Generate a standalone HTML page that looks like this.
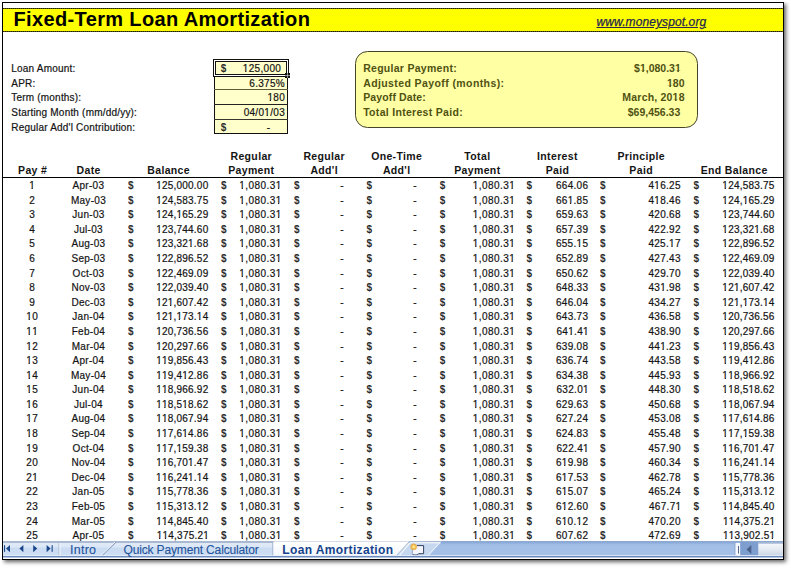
<!DOCTYPE html>
<html><head><meta charset="utf-8">
<style>
html,body{margin:0;padding:0;background:#fff;}
body{width:791px;height:568px;position:relative;overflow:hidden;font-family:"Liberation Sans",sans-serif;color:#141414;}
#t div{position:absolute;white-space:pre;font-size:10px;line-height:12px;-webkit-text-stroke:0.2px #141414;}
i.o{font-style:normal;display:inline-block;clip-path:polygon(0 0,100% 0,100% 8px,3.6px 8px,3.6px 100%,2.3px 100%,2.3px 8px,0 8px);}
i.ob{font-style:normal;display:inline-block;clip-path:polygon(0 0,100% 0,100% 9px,3.95px 9px,3.95px 100%,2.35px 100%,2.35px 9px,0 9px);}
.d{font-weight:bold;-webkit-text-stroke:0 !important;color:#2c2c2c;}
.sb{color:#4f5212;}
.abs{position:absolute;}
</style></head><body>
<!-- shadow -->
<div class="abs" style="left:2px;top:2px;width:782px;height:558px;box-sizing:border-box;border:1px solid #000;background:#fff;box-shadow:2px 2px 4px rgba(0,0,0,0.62);clip-path:inset(0 -12px -12px 0);"></div>
<!-- title bar -->
<div class="abs" style="left:3px;top:8px;width:780px;height:24px;background:#ffff00;"></div>
<div class="abs" style="left:3px;top:8px;width:780px;height:1px;background:repeating-linear-gradient(90deg,#1e1e06 0 1.4px,#5a5a10 1.4px 2px);"></div>
<div class="abs" style="left:3px;top:31px;width:780px;height:1px;background:repeating-linear-gradient(90deg,#1e1e06 0 1.4px,#5a5a10 1.4px 2px);"></div>
<div class="abs" style="left:13.5px;top:7.2px;font-size:20px;font-weight:bold;letter-spacing:0.36px;line-height:24px;color:#000;white-space:pre;">Fixed-Term Loan Amortization</div>
<div class="abs" style="left:596.5px;top:14px;font-size:12px;font-style:italic;letter-spacing:0.1px;line-height:16px;color:#26264f;-webkit-text-stroke:0.25px #26264f;text-underline-offset:1px;text-decoration:underline;white-space:pre;">www.moneyspot.org</div>
<!-- input box -->
<div class="abs" style="left:214px;top:60px;width:74px;height:74px;box-sizing:border-box;border:1px solid #111;background:#ffffcc;"></div>
<div class="abs" style="left:214px;top:89px;width:74px;height:1.4px;background:#5e5a3c;"></div>
<div class="abs" style="left:214px;top:104px;width:74px;height:1px;background:#222;"></div>
<div class="abs" style="left:214px;top:119px;width:74px;height:1px;background:#38362a;"></div>
<div class="abs" style="left:213px;top:59px;width:76px;height:18px;box-sizing:border-box;border:1px solid #111;"></div>
<div class="abs" style="left:214px;top:60px;width:74px;height:16px;box-sizing:border-box;border:1px solid #fff;"></div>
<div class="abs" style="left:215px;top:61px;width:72px;height:14px;box-sizing:border-box;border:1px solid #111;"></div>
<div class="abs" style="left:285px;top:73px;width:5px;height:5px;background:#111;"></div>
<div class="abs" style="left:287px;top:73px;width:1px;height:5px;background:rgba(255,255,255,0.5);"></div>
<div class="abs" style="left:285px;top:75px;width:5px;height:1px;background:rgba(255,255,255,0.5);"></div>
<!-- summary box -->
<div class="abs" style="left:354.6px;top:51.2px;width:343.2px;height:77px;box-sizing:border-box;border:1.8px solid #45452a;border-radius:12.5px;background:#ffffa4;"></div>
<!-- header underline -->
<div class="abs" style="left:3px;top:177px;width:780px;height:1px;background:#000;"></div>
<div id="t">
<div style="top:63px;letter-spacing:0.2px;left:11.30px;">Loan Amount:</div>
<div style="top:78px;letter-spacing:0.2px;left:11.30px;">APR:</div>
<div style="top:92px;letter-spacing:0.2px;left:11.30px;">Term (months):</div>
<div style="top:107px;letter-spacing:0.2px;left:11.30px;">Starting Month (mm/dd/yy):</div>
<div style="top:122px;letter-spacing:0.2px;left:11.30px;">Regular Add&#39;l Contribution:</div>
<div class="d" style="top:63px;left:220.80px;">$</div>
<div style="top:63px;letter-spacing:0.3px;right:509.90px;text-align:right;"><i class="o">1</i>25,000</div>
<div style="top:78px;letter-spacing:0.3px;right:506.00px;text-align:right;">6.375%</div>
<div style="top:92px;letter-spacing:0.3px;right:506.00px;text-align:right;"><i class="o">1</i>80</div>
<div style="top:107px;letter-spacing:0.3px;right:506.00px;text-align:right;">04/0<i class="o">1</i>/03</div>
<div class="d" style="top:122px;left:220.80px;">$</div>
<div style="top:122px;right:520.80px;text-align:right;">-</div>
<div class="sb" style="top:62px;font-size:10.5px;line-height:13px;font-weight:bold;-webkit-text-stroke:0;letter-spacing:0.28px;left:363.20px;">Regular Payment:</div>
<div class="sb" style="top:62px;font-size:10.5px;line-height:13px;font-weight:bold;-webkit-text-stroke:0;right:110.20px;text-align:right;">$<i class="ob">1</i>,080.3<i class="ob">1</i></div>
<div class="sb" style="top:77px;font-size:10.5px;line-height:13px;font-weight:bold;-webkit-text-stroke:0;letter-spacing:0.4px;left:363.20px;">Adjusted Payoff (months):</div>
<div class="sb" style="top:77px;font-size:10.5px;line-height:13px;font-weight:bold;-webkit-text-stroke:0;right:106.50px;text-align:right;"><i class="ob">1</i>80</div>
<div class="sb" style="top:91px;font-size:10.5px;line-height:13px;font-weight:bold;-webkit-text-stroke:0;letter-spacing:0.12px;left:363.20px;">Payoff Date:</div>
<div class="sb" style="top:91px;font-size:10.5px;line-height:13px;font-weight:bold;-webkit-text-stroke:0;letter-spacing:0.2px;right:106.30px;text-align:right;">March, 20<i class="ob">1</i>8</div>
<div class="sb" style="top:106px;font-size:10.5px;line-height:13px;font-weight:bold;-webkit-text-stroke:0;letter-spacing:0.3px;left:363.20px;">Total Interest Paid:</div>
<div class="sb" style="top:106px;font-size:10.5px;line-height:13px;font-weight:bold;-webkit-text-stroke:0;right:110.70px;text-align:right;">$69,456.33</div>
<div style="top:164px;font-size:10.5px;line-height:13px;font-weight:bold;-webkit-text-stroke:0;letter-spacing:0.35px;left:-67.33px;width:200px;text-align:center;">Pay #</div>
<div style="top:164px;font-size:10.5px;line-height:13px;font-weight:bold;-webkit-text-stroke:0;letter-spacing:0.35px;left:-11.32px;width:200px;text-align:center;">Date</div>
<div style="top:164px;font-size:10.5px;line-height:13px;font-weight:bold;-webkit-text-stroke:0;letter-spacing:0.35px;left:68.67px;width:200px;text-align:center;">Balance</div>
<div style="top:150px;font-size:10.5px;line-height:13px;font-weight:bold;-webkit-text-stroke:0;letter-spacing:0.35px;left:151.28px;width:200px;text-align:center;">Regular</div>
<div style="top:164px;font-size:10.5px;line-height:13px;font-weight:bold;-webkit-text-stroke:0;letter-spacing:0.35px;left:151.28px;width:200px;text-align:center;">Payment</div>
<div style="top:150px;font-size:10.5px;line-height:13px;font-weight:bold;-webkit-text-stroke:0;letter-spacing:0.35px;left:224.18px;width:200px;text-align:center;">Regular</div>
<div style="top:164px;font-size:10.5px;line-height:13px;font-weight:bold;-webkit-text-stroke:0;letter-spacing:0.35px;left:224.18px;width:200px;text-align:center;">Add&#39;l</div>
<div style="top:150px;font-size:10.5px;line-height:13px;font-weight:bold;-webkit-text-stroke:0;letter-spacing:0.35px;left:296.68px;width:200px;text-align:center;">One-Time</div>
<div style="top:164px;font-size:10.5px;line-height:13px;font-weight:bold;-webkit-text-stroke:0;letter-spacing:0.35px;left:296.68px;width:200px;text-align:center;">Add&#39;l</div>
<div style="top:150px;font-size:10.5px;line-height:13px;font-weight:bold;-webkit-text-stroke:0;letter-spacing:0.35px;left:377.38px;width:200px;text-align:center;">Total</div>
<div style="top:164px;font-size:10.5px;line-height:13px;font-weight:bold;-webkit-text-stroke:0;letter-spacing:0.35px;left:377.38px;width:200px;text-align:center;">Payment</div>
<div style="top:150px;font-size:10.5px;line-height:13px;font-weight:bold;-webkit-text-stroke:0;letter-spacing:0.35px;left:457.47px;width:200px;text-align:center;">Interest</div>
<div style="top:164px;font-size:10.5px;line-height:13px;font-weight:bold;-webkit-text-stroke:0;letter-spacing:0.35px;left:457.47px;width:200px;text-align:center;">Paid</div>
<div style="top:150px;font-size:10.5px;line-height:13px;font-weight:bold;-webkit-text-stroke:0;letter-spacing:0.35px;left:541.17px;width:200px;text-align:center;">Principle</div>
<div style="top:164px;font-size:10.5px;line-height:13px;font-weight:bold;-webkit-text-stroke:0;letter-spacing:0.35px;left:541.17px;width:200px;text-align:center;">Paid</div>
<div style="top:164px;font-size:10.5px;line-height:13px;font-weight:bold;-webkit-text-stroke:0;letter-spacing:0.35px;left:634.17px;width:200px;text-align:center;">End Balance</div>
<div style="top:180px;letter-spacing:0.3px;left:-67.85px;width:200px;text-align:center;"><i class="o">1</i></div>
<div style="top:180px;letter-spacing:0.3px;left:-11.55px;width:200px;text-align:center;">Apr-03</div>
<div class="d" style="top:180px;left:128.00px;">$</div>
<div style="top:180px;letter-spacing:0.22px;right:582.58px;text-align:right;"><i class="o">1</i>25,000.00</div>
<div class="d" style="top:180px;left:221.10px;">$</div>
<div style="top:180px;letter-spacing:0.42px;right:509.38px;text-align:right;"><i class="o">1</i>,080.3<i class="o">1</i></div>
<div class="d" style="top:180px;left:294.10px;">$</div>
<div style="top:180px;right:447.50px;text-align:right;">-</div>
<div class="d" style="top:180px;left:366.40px;">$</div>
<div style="top:180px;right:374.50px;text-align:right;">-</div>
<div class="d" style="top:180px;left:439.80px;">$</div>
<div style="top:180px;letter-spacing:0.42px;right:275.88px;text-align:right;"><i class="o">1</i>,080.3<i class="o">1</i></div>
<div class="d" style="top:180px;left:526.60px;">$</div>
<div style="top:180px;letter-spacing:0.3px;right:202.70px;text-align:right;">664.06</div>
<div class="d" style="top:180px;left:599.90px;">$</div>
<div style="top:180px;letter-spacing:0.3px;right:110.20px;text-align:right;">4<i class="o">1</i>6.25</div>
<div class="d" style="top:180px;left:693.50px;">$</div>
<div style="top:180px;letter-spacing:0.22px;right:16.38px;text-align:right;"><i class="o">1</i>24,583.75</div>
<div style="top:195px;letter-spacing:0.3px;left:-67.85px;width:200px;text-align:center;">2</div>
<div style="top:195px;letter-spacing:0.3px;left:-11.55px;width:200px;text-align:center;">May-03</div>
<div class="d" style="top:195px;left:128.00px;">$</div>
<div style="top:195px;letter-spacing:0.22px;right:582.58px;text-align:right;"><i class="o">1</i>24,583.75</div>
<div class="d" style="top:195px;left:221.10px;">$</div>
<div style="top:195px;letter-spacing:0.42px;right:509.38px;text-align:right;"><i class="o">1</i>,080.3<i class="o">1</i></div>
<div class="d" style="top:195px;left:294.10px;">$</div>
<div style="top:195px;right:447.50px;text-align:right;">-</div>
<div class="d" style="top:195px;left:366.40px;">$</div>
<div style="top:195px;right:374.50px;text-align:right;">-</div>
<div class="d" style="top:195px;left:439.80px;">$</div>
<div style="top:195px;letter-spacing:0.42px;right:275.88px;text-align:right;"><i class="o">1</i>,080.3<i class="o">1</i></div>
<div class="d" style="top:195px;left:526.60px;">$</div>
<div style="top:195px;letter-spacing:0.3px;right:202.70px;text-align:right;">66<i class="o">1</i>.85</div>
<div class="d" style="top:195px;left:599.90px;">$</div>
<div style="top:195px;letter-spacing:0.3px;right:110.20px;text-align:right;">4<i class="o">1</i>8.46</div>
<div class="d" style="top:195px;left:693.50px;">$</div>
<div style="top:195px;letter-spacing:0.22px;right:16.38px;text-align:right;"><i class="o">1</i>24,<i class="o">1</i>65.29</div>
<div style="top:209px;letter-spacing:0.3px;left:-67.85px;width:200px;text-align:center;">3</div>
<div style="top:209px;letter-spacing:0.3px;left:-11.55px;width:200px;text-align:center;">Jun-03</div>
<div class="d" style="top:209px;left:128.00px;">$</div>
<div style="top:209px;letter-spacing:0.22px;right:582.58px;text-align:right;"><i class="o">1</i>24,<i class="o">1</i>65.29</div>
<div class="d" style="top:209px;left:221.10px;">$</div>
<div style="top:209px;letter-spacing:0.42px;right:509.38px;text-align:right;"><i class="o">1</i>,080.3<i class="o">1</i></div>
<div class="d" style="top:209px;left:294.10px;">$</div>
<div style="top:209px;right:447.50px;text-align:right;">-</div>
<div class="d" style="top:209px;left:366.40px;">$</div>
<div style="top:209px;right:374.50px;text-align:right;">-</div>
<div class="d" style="top:209px;left:439.80px;">$</div>
<div style="top:209px;letter-spacing:0.42px;right:275.88px;text-align:right;"><i class="o">1</i>,080.3<i class="o">1</i></div>
<div class="d" style="top:209px;left:526.60px;">$</div>
<div style="top:209px;letter-spacing:0.3px;right:202.70px;text-align:right;">659.63</div>
<div class="d" style="top:209px;left:599.90px;">$</div>
<div style="top:209px;letter-spacing:0.3px;right:110.20px;text-align:right;">420.68</div>
<div class="d" style="top:209px;left:693.50px;">$</div>
<div style="top:209px;letter-spacing:0.22px;right:16.38px;text-align:right;"><i class="o">1</i>23,744.60</div>
<div style="top:224px;letter-spacing:0.3px;left:-67.85px;width:200px;text-align:center;">4</div>
<div style="top:224px;letter-spacing:0.3px;left:-11.55px;width:200px;text-align:center;">Jul-03</div>
<div class="d" style="top:224px;left:128.00px;">$</div>
<div style="top:224px;letter-spacing:0.22px;right:582.58px;text-align:right;"><i class="o">1</i>23,744.60</div>
<div class="d" style="top:224px;left:221.10px;">$</div>
<div style="top:224px;letter-spacing:0.42px;right:509.38px;text-align:right;"><i class="o">1</i>,080.3<i class="o">1</i></div>
<div class="d" style="top:224px;left:294.10px;">$</div>
<div style="top:224px;right:447.50px;text-align:right;">-</div>
<div class="d" style="top:224px;left:366.40px;">$</div>
<div style="top:224px;right:374.50px;text-align:right;">-</div>
<div class="d" style="top:224px;left:439.80px;">$</div>
<div style="top:224px;letter-spacing:0.42px;right:275.88px;text-align:right;"><i class="o">1</i>,080.3<i class="o">1</i></div>
<div class="d" style="top:224px;left:526.60px;">$</div>
<div style="top:224px;letter-spacing:0.3px;right:202.70px;text-align:right;">657.39</div>
<div class="d" style="top:224px;left:599.90px;">$</div>
<div style="top:224px;letter-spacing:0.3px;right:110.20px;text-align:right;">422.92</div>
<div class="d" style="top:224px;left:693.50px;">$</div>
<div style="top:224px;letter-spacing:0.22px;right:16.38px;text-align:right;"><i class="o">1</i>23,32<i class="o">1</i>.68</div>
<div style="top:238px;letter-spacing:0.3px;left:-67.85px;width:200px;text-align:center;">5</div>
<div style="top:238px;letter-spacing:0.3px;left:-11.55px;width:200px;text-align:center;">Aug-03</div>
<div class="d" style="top:238px;left:128.00px;">$</div>
<div style="top:238px;letter-spacing:0.22px;right:582.58px;text-align:right;"><i class="o">1</i>23,32<i class="o">1</i>.68</div>
<div class="d" style="top:238px;left:221.10px;">$</div>
<div style="top:238px;letter-spacing:0.42px;right:509.38px;text-align:right;"><i class="o">1</i>,080.3<i class="o">1</i></div>
<div class="d" style="top:238px;left:294.10px;">$</div>
<div style="top:238px;right:447.50px;text-align:right;">-</div>
<div class="d" style="top:238px;left:366.40px;">$</div>
<div style="top:238px;right:374.50px;text-align:right;">-</div>
<div class="d" style="top:238px;left:439.80px;">$</div>
<div style="top:238px;letter-spacing:0.42px;right:275.88px;text-align:right;"><i class="o">1</i>,080.3<i class="o">1</i></div>
<div class="d" style="top:238px;left:526.60px;">$</div>
<div style="top:238px;letter-spacing:0.3px;right:202.70px;text-align:right;">655.<i class="o">1</i>5</div>
<div class="d" style="top:238px;left:599.90px;">$</div>
<div style="top:238px;letter-spacing:0.3px;right:110.20px;text-align:right;">425.<i class="o">1</i>7</div>
<div class="d" style="top:238px;left:693.50px;">$</div>
<div style="top:238px;letter-spacing:0.22px;right:16.38px;text-align:right;"><i class="o">1</i>22,896.52</div>
<div style="top:253px;letter-spacing:0.3px;left:-67.85px;width:200px;text-align:center;">6</div>
<div style="top:253px;letter-spacing:0.3px;left:-11.55px;width:200px;text-align:center;">Sep-03</div>
<div class="d" style="top:253px;left:128.00px;">$</div>
<div style="top:253px;letter-spacing:0.22px;right:582.58px;text-align:right;"><i class="o">1</i>22,896.52</div>
<div class="d" style="top:253px;left:221.10px;">$</div>
<div style="top:253px;letter-spacing:0.42px;right:509.38px;text-align:right;"><i class="o">1</i>,080.3<i class="o">1</i></div>
<div class="d" style="top:253px;left:294.10px;">$</div>
<div style="top:253px;right:447.50px;text-align:right;">-</div>
<div class="d" style="top:253px;left:366.40px;">$</div>
<div style="top:253px;right:374.50px;text-align:right;">-</div>
<div class="d" style="top:253px;left:439.80px;">$</div>
<div style="top:253px;letter-spacing:0.42px;right:275.88px;text-align:right;"><i class="o">1</i>,080.3<i class="o">1</i></div>
<div class="d" style="top:253px;left:526.60px;">$</div>
<div style="top:253px;letter-spacing:0.3px;right:202.70px;text-align:right;">652.89</div>
<div class="d" style="top:253px;left:599.90px;">$</div>
<div style="top:253px;letter-spacing:0.3px;right:110.20px;text-align:right;">427.43</div>
<div class="d" style="top:253px;left:693.50px;">$</div>
<div style="top:253px;letter-spacing:0.22px;right:16.38px;text-align:right;"><i class="o">1</i>22,469.09</div>
<div style="top:268px;letter-spacing:0.3px;left:-67.85px;width:200px;text-align:center;">7</div>
<div style="top:268px;letter-spacing:0.3px;left:-11.55px;width:200px;text-align:center;">Oct-03</div>
<div class="d" style="top:268px;left:128.00px;">$</div>
<div style="top:268px;letter-spacing:0.22px;right:582.58px;text-align:right;"><i class="o">1</i>22,469.09</div>
<div class="d" style="top:268px;left:221.10px;">$</div>
<div style="top:268px;letter-spacing:0.42px;right:509.38px;text-align:right;"><i class="o">1</i>,080.3<i class="o">1</i></div>
<div class="d" style="top:268px;left:294.10px;">$</div>
<div style="top:268px;right:447.50px;text-align:right;">-</div>
<div class="d" style="top:268px;left:366.40px;">$</div>
<div style="top:268px;right:374.50px;text-align:right;">-</div>
<div class="d" style="top:268px;left:439.80px;">$</div>
<div style="top:268px;letter-spacing:0.42px;right:275.88px;text-align:right;"><i class="o">1</i>,080.3<i class="o">1</i></div>
<div class="d" style="top:268px;left:526.60px;">$</div>
<div style="top:268px;letter-spacing:0.3px;right:202.70px;text-align:right;">650.62</div>
<div class="d" style="top:268px;left:599.90px;">$</div>
<div style="top:268px;letter-spacing:0.3px;right:110.20px;text-align:right;">429.70</div>
<div class="d" style="top:268px;left:693.50px;">$</div>
<div style="top:268px;letter-spacing:0.22px;right:16.38px;text-align:right;"><i class="o">1</i>22,039.40</div>
<div style="top:282px;letter-spacing:0.3px;left:-67.85px;width:200px;text-align:center;">8</div>
<div style="top:282px;letter-spacing:0.3px;left:-11.55px;width:200px;text-align:center;">Nov-03</div>
<div class="d" style="top:282px;left:128.00px;">$</div>
<div style="top:282px;letter-spacing:0.22px;right:582.58px;text-align:right;"><i class="o">1</i>22,039.40</div>
<div class="d" style="top:282px;left:221.10px;">$</div>
<div style="top:282px;letter-spacing:0.42px;right:509.38px;text-align:right;"><i class="o">1</i>,080.3<i class="o">1</i></div>
<div class="d" style="top:282px;left:294.10px;">$</div>
<div style="top:282px;right:447.50px;text-align:right;">-</div>
<div class="d" style="top:282px;left:366.40px;">$</div>
<div style="top:282px;right:374.50px;text-align:right;">-</div>
<div class="d" style="top:282px;left:439.80px;">$</div>
<div style="top:282px;letter-spacing:0.42px;right:275.88px;text-align:right;"><i class="o">1</i>,080.3<i class="o">1</i></div>
<div class="d" style="top:282px;left:526.60px;">$</div>
<div style="top:282px;letter-spacing:0.3px;right:202.70px;text-align:right;">648.33</div>
<div class="d" style="top:282px;left:599.90px;">$</div>
<div style="top:282px;letter-spacing:0.3px;right:110.20px;text-align:right;">43<i class="o">1</i>.98</div>
<div class="d" style="top:282px;left:693.50px;">$</div>
<div style="top:282px;letter-spacing:0.22px;right:16.38px;text-align:right;"><i class="o">1</i>2<i class="o">1</i>,607.42</div>
<div style="top:297px;letter-spacing:0.3px;left:-67.85px;width:200px;text-align:center;">9</div>
<div style="top:297px;letter-spacing:0.3px;left:-11.55px;width:200px;text-align:center;">Dec-03</div>
<div class="d" style="top:297px;left:128.00px;">$</div>
<div style="top:297px;letter-spacing:0.22px;right:582.58px;text-align:right;"><i class="o">1</i>2<i class="o">1</i>,607.42</div>
<div class="d" style="top:297px;left:221.10px;">$</div>
<div style="top:297px;letter-spacing:0.42px;right:509.38px;text-align:right;"><i class="o">1</i>,080.3<i class="o">1</i></div>
<div class="d" style="top:297px;left:294.10px;">$</div>
<div style="top:297px;right:447.50px;text-align:right;">-</div>
<div class="d" style="top:297px;left:366.40px;">$</div>
<div style="top:297px;right:374.50px;text-align:right;">-</div>
<div class="d" style="top:297px;left:439.80px;">$</div>
<div style="top:297px;letter-spacing:0.42px;right:275.88px;text-align:right;"><i class="o">1</i>,080.3<i class="o">1</i></div>
<div class="d" style="top:297px;left:526.60px;">$</div>
<div style="top:297px;letter-spacing:0.3px;right:202.70px;text-align:right;">646.04</div>
<div class="d" style="top:297px;left:599.90px;">$</div>
<div style="top:297px;letter-spacing:0.3px;right:110.20px;text-align:right;">434.27</div>
<div class="d" style="top:297px;left:693.50px;">$</div>
<div style="top:297px;letter-spacing:0.22px;right:16.38px;text-align:right;"><i class="o">1</i>2<i class="o">1</i>,<i class="o">1</i>73.<i class="o">1</i>4</div>
<div style="top:311px;letter-spacing:0.3px;left:-67.85px;width:200px;text-align:center;"><i class="o">1</i>0</div>
<div style="top:311px;letter-spacing:0.3px;left:-11.55px;width:200px;text-align:center;">Jan-04</div>
<div class="d" style="top:311px;left:128.00px;">$</div>
<div style="top:311px;letter-spacing:0.22px;right:582.58px;text-align:right;"><i class="o">1</i>2<i class="o">1</i>,<i class="o">1</i>73.<i class="o">1</i>4</div>
<div class="d" style="top:311px;left:221.10px;">$</div>
<div style="top:311px;letter-spacing:0.42px;right:509.38px;text-align:right;"><i class="o">1</i>,080.3<i class="o">1</i></div>
<div class="d" style="top:311px;left:294.10px;">$</div>
<div style="top:311px;right:447.50px;text-align:right;">-</div>
<div class="d" style="top:311px;left:366.40px;">$</div>
<div style="top:311px;right:374.50px;text-align:right;">-</div>
<div class="d" style="top:311px;left:439.80px;">$</div>
<div style="top:311px;letter-spacing:0.42px;right:275.88px;text-align:right;"><i class="o">1</i>,080.3<i class="o">1</i></div>
<div class="d" style="top:311px;left:526.60px;">$</div>
<div style="top:311px;letter-spacing:0.3px;right:202.70px;text-align:right;">643.73</div>
<div class="d" style="top:311px;left:599.90px;">$</div>
<div style="top:311px;letter-spacing:0.3px;right:110.20px;text-align:right;">436.58</div>
<div class="d" style="top:311px;left:693.50px;">$</div>
<div style="top:311px;letter-spacing:0.22px;right:16.38px;text-align:right;"><i class="o">1</i>20,736.56</div>
<div style="top:326px;letter-spacing:0.3px;left:-67.85px;width:200px;text-align:center;"><i class="o">1</i><i class="o">1</i></div>
<div style="top:326px;letter-spacing:0.3px;left:-11.55px;width:200px;text-align:center;">Feb-04</div>
<div class="d" style="top:326px;left:128.00px;">$</div>
<div style="top:326px;letter-spacing:0.22px;right:582.58px;text-align:right;"><i class="o">1</i>20,736.56</div>
<div class="d" style="top:326px;left:221.10px;">$</div>
<div style="top:326px;letter-spacing:0.42px;right:509.38px;text-align:right;"><i class="o">1</i>,080.3<i class="o">1</i></div>
<div class="d" style="top:326px;left:294.10px;">$</div>
<div style="top:326px;right:447.50px;text-align:right;">-</div>
<div class="d" style="top:326px;left:366.40px;">$</div>
<div style="top:326px;right:374.50px;text-align:right;">-</div>
<div class="d" style="top:326px;left:439.80px;">$</div>
<div style="top:326px;letter-spacing:0.42px;right:275.88px;text-align:right;"><i class="o">1</i>,080.3<i class="o">1</i></div>
<div class="d" style="top:326px;left:526.60px;">$</div>
<div style="top:326px;letter-spacing:0.3px;right:202.10px;text-align:right;">64<i class="o">1</i>.4<i class="o">1</i></div>
<div class="d" style="top:326px;left:599.90px;">$</div>
<div style="top:326px;letter-spacing:0.3px;right:110.20px;text-align:right;">438.90</div>
<div class="d" style="top:326px;left:693.50px;">$</div>
<div style="top:326px;letter-spacing:0.22px;right:16.38px;text-align:right;"><i class="o">1</i>20,297.66</div>
<div style="top:341px;letter-spacing:0.3px;left:-67.85px;width:200px;text-align:center;"><i class="o">1</i>2</div>
<div style="top:341px;letter-spacing:0.3px;left:-11.55px;width:200px;text-align:center;">Mar-04</div>
<div class="d" style="top:341px;left:128.00px;">$</div>
<div style="top:341px;letter-spacing:0.22px;right:582.58px;text-align:right;"><i class="o">1</i>20,297.66</div>
<div class="d" style="top:341px;left:221.10px;">$</div>
<div style="top:341px;letter-spacing:0.42px;right:509.38px;text-align:right;"><i class="o">1</i>,080.3<i class="o">1</i></div>
<div class="d" style="top:341px;left:294.10px;">$</div>
<div style="top:341px;right:447.50px;text-align:right;">-</div>
<div class="d" style="top:341px;left:366.40px;">$</div>
<div style="top:341px;right:374.50px;text-align:right;">-</div>
<div class="d" style="top:341px;left:439.80px;">$</div>
<div style="top:341px;letter-spacing:0.42px;right:275.88px;text-align:right;"><i class="o">1</i>,080.3<i class="o">1</i></div>
<div class="d" style="top:341px;left:526.60px;">$</div>
<div style="top:341px;letter-spacing:0.3px;right:202.70px;text-align:right;">639.08</div>
<div class="d" style="top:341px;left:599.90px;">$</div>
<div style="top:341px;letter-spacing:0.3px;right:110.20px;text-align:right;">44<i class="o">1</i>.23</div>
<div class="d" style="top:341px;left:693.50px;">$</div>
<div style="top:341px;letter-spacing:0.22px;right:16.38px;text-align:right;"><i class="o">1</i><i class="o">1</i>9,856.43</div>
<div style="top:355px;letter-spacing:0.3px;left:-67.85px;width:200px;text-align:center;"><i class="o">1</i>3</div>
<div style="top:355px;letter-spacing:0.3px;left:-11.55px;width:200px;text-align:center;">Apr-04</div>
<div class="d" style="top:355px;left:128.00px;">$</div>
<div style="top:355px;letter-spacing:0.22px;right:582.58px;text-align:right;"><i class="o">1</i><i class="o">1</i>9,856.43</div>
<div class="d" style="top:355px;left:221.10px;">$</div>
<div style="top:355px;letter-spacing:0.42px;right:509.38px;text-align:right;"><i class="o">1</i>,080.3<i class="o">1</i></div>
<div class="d" style="top:355px;left:294.10px;">$</div>
<div style="top:355px;right:447.50px;text-align:right;">-</div>
<div class="d" style="top:355px;left:366.40px;">$</div>
<div style="top:355px;right:374.50px;text-align:right;">-</div>
<div class="d" style="top:355px;left:439.80px;">$</div>
<div style="top:355px;letter-spacing:0.42px;right:275.88px;text-align:right;"><i class="o">1</i>,080.3<i class="o">1</i></div>
<div class="d" style="top:355px;left:526.60px;">$</div>
<div style="top:355px;letter-spacing:0.3px;right:202.70px;text-align:right;">636.74</div>
<div class="d" style="top:355px;left:599.90px;">$</div>
<div style="top:355px;letter-spacing:0.3px;right:110.20px;text-align:right;">443.58</div>
<div class="d" style="top:355px;left:693.50px;">$</div>
<div style="top:355px;letter-spacing:0.22px;right:16.38px;text-align:right;"><i class="o">1</i><i class="o">1</i>9,4<i class="o">1</i>2.86</div>
<div style="top:370px;letter-spacing:0.3px;left:-67.85px;width:200px;text-align:center;"><i class="o">1</i>4</div>
<div style="top:370px;letter-spacing:0.3px;left:-11.55px;width:200px;text-align:center;">May-04</div>
<div class="d" style="top:370px;left:128.00px;">$</div>
<div style="top:370px;letter-spacing:0.22px;right:582.58px;text-align:right;"><i class="o">1</i><i class="o">1</i>9,4<i class="o">1</i>2.86</div>
<div class="d" style="top:370px;left:221.10px;">$</div>
<div style="top:370px;letter-spacing:0.42px;right:509.38px;text-align:right;"><i class="o">1</i>,080.3<i class="o">1</i></div>
<div class="d" style="top:370px;left:294.10px;">$</div>
<div style="top:370px;right:447.50px;text-align:right;">-</div>
<div class="d" style="top:370px;left:366.40px;">$</div>
<div style="top:370px;right:374.50px;text-align:right;">-</div>
<div class="d" style="top:370px;left:439.80px;">$</div>
<div style="top:370px;letter-spacing:0.42px;right:275.88px;text-align:right;"><i class="o">1</i>,080.3<i class="o">1</i></div>
<div class="d" style="top:370px;left:526.60px;">$</div>
<div style="top:370px;letter-spacing:0.3px;right:202.70px;text-align:right;">634.38</div>
<div class="d" style="top:370px;left:599.90px;">$</div>
<div style="top:370px;letter-spacing:0.3px;right:110.20px;text-align:right;">445.93</div>
<div class="d" style="top:370px;left:693.50px;">$</div>
<div style="top:370px;letter-spacing:0.22px;right:16.38px;text-align:right;"><i class="o">1</i><i class="o">1</i>8,966.92</div>
<div style="top:384px;letter-spacing:0.3px;left:-67.85px;width:200px;text-align:center;"><i class="o">1</i>5</div>
<div style="top:384px;letter-spacing:0.3px;left:-11.55px;width:200px;text-align:center;">Jun-04</div>
<div class="d" style="top:384px;left:128.00px;">$</div>
<div style="top:384px;letter-spacing:0.22px;right:582.58px;text-align:right;"><i class="o">1</i><i class="o">1</i>8,966.92</div>
<div class="d" style="top:384px;left:221.10px;">$</div>
<div style="top:384px;letter-spacing:0.42px;right:509.38px;text-align:right;"><i class="o">1</i>,080.3<i class="o">1</i></div>
<div class="d" style="top:384px;left:294.10px;">$</div>
<div style="top:384px;right:447.50px;text-align:right;">-</div>
<div class="d" style="top:384px;left:366.40px;">$</div>
<div style="top:384px;right:374.50px;text-align:right;">-</div>
<div class="d" style="top:384px;left:439.80px;">$</div>
<div style="top:384px;letter-spacing:0.42px;right:275.88px;text-align:right;"><i class="o">1</i>,080.3<i class="o">1</i></div>
<div class="d" style="top:384px;left:526.60px;">$</div>
<div style="top:384px;letter-spacing:0.3px;right:202.10px;text-align:right;">632.0<i class="o">1</i></div>
<div class="d" style="top:384px;left:599.90px;">$</div>
<div style="top:384px;letter-spacing:0.3px;right:110.20px;text-align:right;">448.30</div>
<div class="d" style="top:384px;left:693.50px;">$</div>
<div style="top:384px;letter-spacing:0.22px;right:16.38px;text-align:right;"><i class="o">1</i><i class="o">1</i>8,5<i class="o">1</i>8.62</div>
<div style="top:399px;letter-spacing:0.3px;left:-67.85px;width:200px;text-align:center;"><i class="o">1</i>6</div>
<div style="top:399px;letter-spacing:0.3px;left:-11.55px;width:200px;text-align:center;">Jul-04</div>
<div class="d" style="top:399px;left:128.00px;">$</div>
<div style="top:399px;letter-spacing:0.22px;right:582.58px;text-align:right;"><i class="o">1</i><i class="o">1</i>8,5<i class="o">1</i>8.62</div>
<div class="d" style="top:399px;left:221.10px;">$</div>
<div style="top:399px;letter-spacing:0.42px;right:509.38px;text-align:right;"><i class="o">1</i>,080.3<i class="o">1</i></div>
<div class="d" style="top:399px;left:294.10px;">$</div>
<div style="top:399px;right:447.50px;text-align:right;">-</div>
<div class="d" style="top:399px;left:366.40px;">$</div>
<div style="top:399px;right:374.50px;text-align:right;">-</div>
<div class="d" style="top:399px;left:439.80px;">$</div>
<div style="top:399px;letter-spacing:0.42px;right:275.88px;text-align:right;"><i class="o">1</i>,080.3<i class="o">1</i></div>
<div class="d" style="top:399px;left:526.60px;">$</div>
<div style="top:399px;letter-spacing:0.3px;right:202.70px;text-align:right;">629.63</div>
<div class="d" style="top:399px;left:599.90px;">$</div>
<div style="top:399px;letter-spacing:0.3px;right:110.20px;text-align:right;">450.68</div>
<div class="d" style="top:399px;left:693.50px;">$</div>
<div style="top:399px;letter-spacing:0.22px;right:16.38px;text-align:right;"><i class="o">1</i><i class="o">1</i>8,067.94</div>
<div style="top:413px;letter-spacing:0.3px;left:-67.85px;width:200px;text-align:center;"><i class="o">1</i>7</div>
<div style="top:413px;letter-spacing:0.3px;left:-11.55px;width:200px;text-align:center;">Aug-04</div>
<div class="d" style="top:413px;left:128.00px;">$</div>
<div style="top:413px;letter-spacing:0.22px;right:582.58px;text-align:right;"><i class="o">1</i><i class="o">1</i>8,067.94</div>
<div class="d" style="top:413px;left:221.10px;">$</div>
<div style="top:413px;letter-spacing:0.42px;right:509.38px;text-align:right;"><i class="o">1</i>,080.3<i class="o">1</i></div>
<div class="d" style="top:413px;left:294.10px;">$</div>
<div style="top:413px;right:447.50px;text-align:right;">-</div>
<div class="d" style="top:413px;left:366.40px;">$</div>
<div style="top:413px;right:374.50px;text-align:right;">-</div>
<div class="d" style="top:413px;left:439.80px;">$</div>
<div style="top:413px;letter-spacing:0.42px;right:275.88px;text-align:right;"><i class="o">1</i>,080.3<i class="o">1</i></div>
<div class="d" style="top:413px;left:526.60px;">$</div>
<div style="top:413px;letter-spacing:0.3px;right:202.70px;text-align:right;">627.24</div>
<div class="d" style="top:413px;left:599.90px;">$</div>
<div style="top:413px;letter-spacing:0.3px;right:110.20px;text-align:right;">453.08</div>
<div class="d" style="top:413px;left:693.50px;">$</div>
<div style="top:413px;letter-spacing:0.22px;right:16.38px;text-align:right;"><i class="o">1</i><i class="o">1</i>7,6<i class="o">1</i>4.86</div>
<div style="top:428px;letter-spacing:0.3px;left:-67.85px;width:200px;text-align:center;"><i class="o">1</i>8</div>
<div style="top:428px;letter-spacing:0.3px;left:-11.55px;width:200px;text-align:center;">Sep-04</div>
<div class="d" style="top:428px;left:128.00px;">$</div>
<div style="top:428px;letter-spacing:0.22px;right:582.58px;text-align:right;"><i class="o">1</i><i class="o">1</i>7,6<i class="o">1</i>4.86</div>
<div class="d" style="top:428px;left:221.10px;">$</div>
<div style="top:428px;letter-spacing:0.42px;right:509.38px;text-align:right;"><i class="o">1</i>,080.3<i class="o">1</i></div>
<div class="d" style="top:428px;left:294.10px;">$</div>
<div style="top:428px;right:447.50px;text-align:right;">-</div>
<div class="d" style="top:428px;left:366.40px;">$</div>
<div style="top:428px;right:374.50px;text-align:right;">-</div>
<div class="d" style="top:428px;left:439.80px;">$</div>
<div style="top:428px;letter-spacing:0.42px;right:275.88px;text-align:right;"><i class="o">1</i>,080.3<i class="o">1</i></div>
<div class="d" style="top:428px;left:526.60px;">$</div>
<div style="top:428px;letter-spacing:0.3px;right:202.70px;text-align:right;">624.83</div>
<div class="d" style="top:428px;left:599.90px;">$</div>
<div style="top:428px;letter-spacing:0.3px;right:110.20px;text-align:right;">455.48</div>
<div class="d" style="top:428px;left:693.50px;">$</div>
<div style="top:428px;letter-spacing:0.22px;right:16.38px;text-align:right;"><i class="o">1</i><i class="o">1</i>7,<i class="o">1</i>59.38</div>
<div style="top:443px;letter-spacing:0.3px;left:-67.85px;width:200px;text-align:center;"><i class="o">1</i>9</div>
<div style="top:443px;letter-spacing:0.3px;left:-11.55px;width:200px;text-align:center;">Oct-04</div>
<div class="d" style="top:443px;left:128.00px;">$</div>
<div style="top:443px;letter-spacing:0.22px;right:582.58px;text-align:right;"><i class="o">1</i><i class="o">1</i>7,<i class="o">1</i>59.38</div>
<div class="d" style="top:443px;left:221.10px;">$</div>
<div style="top:443px;letter-spacing:0.42px;right:509.38px;text-align:right;"><i class="o">1</i>,080.3<i class="o">1</i></div>
<div class="d" style="top:443px;left:294.10px;">$</div>
<div style="top:443px;right:447.50px;text-align:right;">-</div>
<div class="d" style="top:443px;left:366.40px;">$</div>
<div style="top:443px;right:374.50px;text-align:right;">-</div>
<div class="d" style="top:443px;left:439.80px;">$</div>
<div style="top:443px;letter-spacing:0.42px;right:275.88px;text-align:right;"><i class="o">1</i>,080.3<i class="o">1</i></div>
<div class="d" style="top:443px;left:526.60px;">$</div>
<div style="top:443px;letter-spacing:0.3px;right:202.10px;text-align:right;">622.4<i class="o">1</i></div>
<div class="d" style="top:443px;left:599.90px;">$</div>
<div style="top:443px;letter-spacing:0.3px;right:110.20px;text-align:right;">457.90</div>
<div class="d" style="top:443px;left:693.50px;">$</div>
<div style="top:443px;letter-spacing:0.22px;right:16.38px;text-align:right;"><i class="o">1</i><i class="o">1</i>6,70<i class="o">1</i>.47</div>
<div style="top:457px;letter-spacing:0.3px;left:-67.85px;width:200px;text-align:center;">20</div>
<div style="top:457px;letter-spacing:0.3px;left:-11.55px;width:200px;text-align:center;">Nov-04</div>
<div class="d" style="top:457px;left:128.00px;">$</div>
<div style="top:457px;letter-spacing:0.22px;right:582.58px;text-align:right;"><i class="o">1</i><i class="o">1</i>6,70<i class="o">1</i>.47</div>
<div class="d" style="top:457px;left:221.10px;">$</div>
<div style="top:457px;letter-spacing:0.42px;right:509.38px;text-align:right;"><i class="o">1</i>,080.3<i class="o">1</i></div>
<div class="d" style="top:457px;left:294.10px;">$</div>
<div style="top:457px;right:447.50px;text-align:right;">-</div>
<div class="d" style="top:457px;left:366.40px;">$</div>
<div style="top:457px;right:374.50px;text-align:right;">-</div>
<div class="d" style="top:457px;left:439.80px;">$</div>
<div style="top:457px;letter-spacing:0.42px;right:275.88px;text-align:right;"><i class="o">1</i>,080.3<i class="o">1</i></div>
<div class="d" style="top:457px;left:526.60px;">$</div>
<div style="top:457px;letter-spacing:0.3px;right:202.70px;text-align:right;">6<i class="o">1</i>9.98</div>
<div class="d" style="top:457px;left:599.90px;">$</div>
<div style="top:457px;letter-spacing:0.3px;right:110.20px;text-align:right;">460.34</div>
<div class="d" style="top:457px;left:693.50px;">$</div>
<div style="top:457px;letter-spacing:0.22px;right:16.38px;text-align:right;"><i class="o">1</i><i class="o">1</i>6,24<i class="o">1</i>.<i class="o">1</i>4</div>
<div style="top:472px;letter-spacing:0.3px;left:-67.85px;width:200px;text-align:center;">2<i class="o">1</i></div>
<div style="top:472px;letter-spacing:0.3px;left:-11.55px;width:200px;text-align:center;">Dec-04</div>
<div class="d" style="top:472px;left:128.00px;">$</div>
<div style="top:472px;letter-spacing:0.22px;right:582.58px;text-align:right;"><i class="o">1</i><i class="o">1</i>6,24<i class="o">1</i>.<i class="o">1</i>4</div>
<div class="d" style="top:472px;left:221.10px;">$</div>
<div style="top:472px;letter-spacing:0.42px;right:509.38px;text-align:right;"><i class="o">1</i>,080.3<i class="o">1</i></div>
<div class="d" style="top:472px;left:294.10px;">$</div>
<div style="top:472px;right:447.50px;text-align:right;">-</div>
<div class="d" style="top:472px;left:366.40px;">$</div>
<div style="top:472px;right:374.50px;text-align:right;">-</div>
<div class="d" style="top:472px;left:439.80px;">$</div>
<div style="top:472px;letter-spacing:0.42px;right:275.88px;text-align:right;"><i class="o">1</i>,080.3<i class="o">1</i></div>
<div class="d" style="top:472px;left:526.60px;">$</div>
<div style="top:472px;letter-spacing:0.3px;right:202.70px;text-align:right;">6<i class="o">1</i>7.53</div>
<div class="d" style="top:472px;left:599.90px;">$</div>
<div style="top:472px;letter-spacing:0.3px;right:110.20px;text-align:right;">462.78</div>
<div class="d" style="top:472px;left:693.50px;">$</div>
<div style="top:472px;letter-spacing:0.22px;right:16.38px;text-align:right;"><i class="o">1</i><i class="o">1</i>5,778.36</div>
<div style="top:486px;letter-spacing:0.3px;left:-67.85px;width:200px;text-align:center;">22</div>
<div style="top:486px;letter-spacing:0.3px;left:-11.55px;width:200px;text-align:center;">Jan-05</div>
<div class="d" style="top:486px;left:128.00px;">$</div>
<div style="top:486px;letter-spacing:0.22px;right:582.58px;text-align:right;"><i class="o">1</i><i class="o">1</i>5,778.36</div>
<div class="d" style="top:486px;left:221.10px;">$</div>
<div style="top:486px;letter-spacing:0.42px;right:509.38px;text-align:right;"><i class="o">1</i>,080.3<i class="o">1</i></div>
<div class="d" style="top:486px;left:294.10px;">$</div>
<div style="top:486px;right:447.50px;text-align:right;">-</div>
<div class="d" style="top:486px;left:366.40px;">$</div>
<div style="top:486px;right:374.50px;text-align:right;">-</div>
<div class="d" style="top:486px;left:439.80px;">$</div>
<div style="top:486px;letter-spacing:0.42px;right:275.88px;text-align:right;"><i class="o">1</i>,080.3<i class="o">1</i></div>
<div class="d" style="top:486px;left:526.60px;">$</div>
<div style="top:486px;letter-spacing:0.3px;right:202.70px;text-align:right;">6<i class="o">1</i>5.07</div>
<div class="d" style="top:486px;left:599.90px;">$</div>
<div style="top:486px;letter-spacing:0.3px;right:110.20px;text-align:right;">465.24</div>
<div class="d" style="top:486px;left:693.50px;">$</div>
<div style="top:486px;letter-spacing:0.22px;right:16.38px;text-align:right;"><i class="o">1</i><i class="o">1</i>5,3<i class="o">1</i>3.<i class="o">1</i>2</div>
<div style="top:501px;letter-spacing:0.3px;left:-67.85px;width:200px;text-align:center;">23</div>
<div style="top:501px;letter-spacing:0.3px;left:-11.55px;width:200px;text-align:center;">Feb-05</div>
<div class="d" style="top:501px;left:128.00px;">$</div>
<div style="top:501px;letter-spacing:0.22px;right:582.58px;text-align:right;"><i class="o">1</i><i class="o">1</i>5,3<i class="o">1</i>3.<i class="o">1</i>2</div>
<div class="d" style="top:501px;left:221.10px;">$</div>
<div style="top:501px;letter-spacing:0.42px;right:509.38px;text-align:right;"><i class="o">1</i>,080.3<i class="o">1</i></div>
<div class="d" style="top:501px;left:294.10px;">$</div>
<div style="top:501px;right:447.50px;text-align:right;">-</div>
<div class="d" style="top:501px;left:366.40px;">$</div>
<div style="top:501px;right:374.50px;text-align:right;">-</div>
<div class="d" style="top:501px;left:439.80px;">$</div>
<div style="top:501px;letter-spacing:0.42px;right:275.88px;text-align:right;"><i class="o">1</i>,080.3<i class="o">1</i></div>
<div class="d" style="top:501px;left:526.60px;">$</div>
<div style="top:501px;letter-spacing:0.3px;right:202.70px;text-align:right;">6<i class="o">1</i>2.60</div>
<div class="d" style="top:501px;left:599.90px;">$</div>
<div style="top:501px;letter-spacing:0.3px;right:109.60px;text-align:right;">467.7<i class="o">1</i></div>
<div class="d" style="top:501px;left:693.50px;">$</div>
<div style="top:501px;letter-spacing:0.22px;right:16.38px;text-align:right;"><i class="o">1</i><i class="o">1</i>4,845.40</div>
<div style="top:516px;letter-spacing:0.3px;left:-67.85px;width:200px;text-align:center;">24</div>
<div style="top:516px;letter-spacing:0.3px;left:-11.55px;width:200px;text-align:center;">Mar-05</div>
<div class="d" style="top:516px;left:128.00px;">$</div>
<div style="top:516px;letter-spacing:0.22px;right:582.58px;text-align:right;"><i class="o">1</i><i class="o">1</i>4,845.40</div>
<div class="d" style="top:516px;left:221.10px;">$</div>
<div style="top:516px;letter-spacing:0.42px;right:509.38px;text-align:right;"><i class="o">1</i>,080.3<i class="o">1</i></div>
<div class="d" style="top:516px;left:294.10px;">$</div>
<div style="top:516px;right:447.50px;text-align:right;">-</div>
<div class="d" style="top:516px;left:366.40px;">$</div>
<div style="top:516px;right:374.50px;text-align:right;">-</div>
<div class="d" style="top:516px;left:439.80px;">$</div>
<div style="top:516px;letter-spacing:0.42px;right:275.88px;text-align:right;"><i class="o">1</i>,080.3<i class="o">1</i></div>
<div class="d" style="top:516px;left:526.60px;">$</div>
<div style="top:516px;letter-spacing:0.3px;right:202.70px;text-align:right;">6<i class="o">1</i>0.<i class="o">1</i>2</div>
<div class="d" style="top:516px;left:599.90px;">$</div>
<div style="top:516px;letter-spacing:0.3px;right:110.20px;text-align:right;">470.20</div>
<div class="d" style="top:516px;left:693.50px;">$</div>
<div style="top:516px;letter-spacing:0.22px;right:15.78px;text-align:right;"><i class="o">1</i><i class="o">1</i>4,375.2<i class="o">1</i></div>
<div style="top:530px;letter-spacing:0.3px;left:-67.85px;width:200px;text-align:center;">25</div>
<div style="top:530px;letter-spacing:0.3px;left:-11.55px;width:200px;text-align:center;">Apr-05</div>
<div class="d" style="top:530px;left:128.00px;">$</div>
<div style="top:530px;letter-spacing:0.22px;right:581.98px;text-align:right;"><i class="o">1</i><i class="o">1</i>4,375.2<i class="o">1</i></div>
<div class="d" style="top:530px;left:221.10px;">$</div>
<div style="top:530px;letter-spacing:0.42px;right:509.38px;text-align:right;"><i class="o">1</i>,080.3<i class="o">1</i></div>
<div class="d" style="top:530px;left:294.10px;">$</div>
<div style="top:530px;right:447.50px;text-align:right;">-</div>
<div class="d" style="top:530px;left:366.40px;">$</div>
<div style="top:530px;right:374.50px;text-align:right;">-</div>
<div class="d" style="top:530px;left:439.80px;">$</div>
<div style="top:530px;letter-spacing:0.42px;right:275.88px;text-align:right;"><i class="o">1</i>,080.3<i class="o">1</i></div>
<div class="d" style="top:530px;left:526.60px;">$</div>
<div style="top:530px;letter-spacing:0.3px;right:202.70px;text-align:right;">607.62</div>
<div class="d" style="top:530px;left:599.90px;">$</div>
<div style="top:530px;letter-spacing:0.3px;right:110.20px;text-align:right;">472.69</div>
<div class="d" style="top:530px;left:693.50px;">$</div>
<div style="top:530px;letter-spacing:0.22px;right:15.78px;text-align:right;"><i class="o">1</i><i class="o">1</i>3,902.5<i class="o">1</i></div>
</div>
<!-- tab bar -->
<svg class="abs" style="left:0;top:536px;" width="791" height="24" viewBox="0 536 791 24" shape-rendering="geometricPrecision">
<defs>
<linearGradient id="gTab" x1="0" y1="0" x2="0" y2="1"><stop offset="0" stop-color="#e3ecf8"/><stop offset="0.42" stop-color="#dbe6f6"/><stop offset="0.45" stop-color="#c9dbf2"/><stop offset="1" stop-color="#cfdff4"/></linearGradient>
<linearGradient id="gAct" x1="0" y1="0" x2="0" y2="1"><stop offset="0" stop-color="#ffffff"/><stop offset="1" stop-color="#f3f6fb"/></linearGradient>
<linearGradient id="gStrip" x1="0" y1="0" x2="0" y2="1"><stop offset="0" stop-color="#86a6d7"/><stop offset="0.2" stop-color="#a2bee6"/><stop offset="1" stop-color="#a6c1e8"/></linearGradient>
<linearGradient id="gThumb" x1="0" y1="0" x2="0" y2="1"><stop offset="0" stop-color="#f7f9fc"/><stop offset="0.5" stop-color="#e6ebf3"/><stop offset="1" stop-color="#c9d3e3"/></linearGradient>
<radialGradient id="gStar" cx="0.5" cy="0.5" r="0.5"><stop offset="0" stop-color="#fff7b8"/><stop offset="0.35" stop-color="#f8d060"/><stop offset="0.7" stop-color="#e8a030" stop-opacity="0.85"/><stop offset="1" stop-color="#e8a030" stop-opacity="0"/></radialGradient>
</defs>
<!-- base strip -->
<rect x="3" y="541" width="780" height="18" fill="url(#gStrip)"/>
<rect x="3" y="541" width="780" height="1" fill="#8fa8cf"/>
<!-- nav area + tabs background -->
<polygon points="3,541 3,556 428,556 441,541" fill="url(#gTab)"/>
<polygon points="3,541 441,541 439.3,543 3,543" fill="#a9b9d1"/>
<!-- separators between tabs -->
<rect x="58.5" y="543" width="1" height="13" fill="#a8b8d0"/>
<rect x="59.5" y="543" width="1" height="13" fill="#f4f8fd"/>
<line x1="102" y1="555.5" x2="116" y2="542" stroke="#8ea3c6" stroke-width="1.1"/>
<line x1="101" y1="555.5" x2="115" y2="542" stroke="#ffffff" stroke-width="0.8"/>
<rect x="272.2" y="543" width="1" height="13" fill="#a8b8d0"/>
<!-- active tab -->
<polygon points="273.5,541.5 409.5,541.5 396.5,556 273.5,556" fill="url(#gAct)"/>
<!-- insert tab -->
<polygon points="399.5,556 410,542.5 441,542.5 428,556" fill="#c6d8f0"/>
<polyline points="399.5,555.5 410,542.8 440.5,542.8" fill="none" stroke="#ffffff" stroke-width="1"/>
<line x1="428" y1="555.5" x2="439.5" y2="543" stroke="#f2f6fc" stroke-width="1"/>
<line x1="396.5" y1="555.5" x2="409.5" y2="541.5" stroke="#9fb1cc" stroke-width="0.9"/>
<path d="M412.3,545.6 H423.6 V553.6 H418.6 Q417.2,553.6 416.4,555 H413.8 Q412.3,555 412.3,553.6 Z" fill="#f3f5fa"/>
<polyline points="417,545.6 423.6,545.6 423.6,553.7 418.6,553.7 417.3,555 413.6,555 412.6,554" fill="none" stroke="#33415f" stroke-width="1"/>
<line x1="412.4" y1="549" x2="412.4" y2="554" stroke="#8c9ab3" stroke-width="0.8"/>
<circle cx="413.7" cy="546.8" r="3.9" fill="url(#gStar)"/>
<!-- strip right of tabs -->
<rect x="441" y="542" width="295" height="14" fill="url(#gStrip)"/>
<rect x="734.5" y="542" width="1" height="14" fill="#8aa4cc"/>
<!-- split box -->
<rect x="735.5" y="543" width="4.8" height="12.8" fill="#f4f7fc"/>
<rect x="738" y="546" width="1" height="7.5" fill="#566a8c"/>
<!-- scroll left button -->
<rect x="740.3" y="542" width="17.9" height="14" fill="#7f9ed0"/>
<polygon points="746.5,549.5 751.3,545 751.3,554" fill="#4a6189"/>
<!-- thumb -->
<rect x="758.4" y="542.5" width="24.6" height="13.5" fill="url(#gThumb)"/>
<rect x="758.4" y="542.5" width="24.6" height="1" fill="#7f9ac4"/>
<!-- nav arrows -->
<g fill="#1b468a">
<rect x="4" y="545.2" width="1.1" height="6.6"/>
<polygon points="6,548.6 10,545 10,552.2"/>
<polygon points="19.4,548.6 23.4,545 23.4,552.2"/>
<polygon points="37.2,548.6 33.2,545 33.2,552.2"/>
<polygon points="50.6,548.6 46.6,545 46.6,552.2"/>
<rect x="51.6" y="545.2" width="1.1" height="6.6"/>
</g>
<!-- bottom lines -->
<rect x="3" y="555" width="780" height="1" fill="#e6eef9" opacity="0.8"/>
<rect x="3" y="556" width="780" height="1.6" fill="#6b89bc"/>
<rect x="3" y="557.6" width="780" height="1.4" fill="#ffffff"/>
</svg>
<div class="abs" style="left:70px;top:542.6px;font-size:12.5px;letter-spacing:0.25px;line-height:14px;color:#25549c;-webkit-text-stroke:0.1px #25549c;white-space:pre;">Intro</div>
<div class="abs" style="left:123.5px;top:542.6px;font-size:12px;letter-spacing:-0.15px;line-height:14px;color:#25549c;-webkit-text-stroke:0.1px #25549c;white-space:pre;">Quick Payment Calculator</div>
<div class="abs" style="left:282.3px;top:542.6px;font-size:12px;font-weight:bold;letter-spacing:0.37px;line-height:14px;color:#15428b;white-space:pre;">Loan Amortization</div>
</body></html>
